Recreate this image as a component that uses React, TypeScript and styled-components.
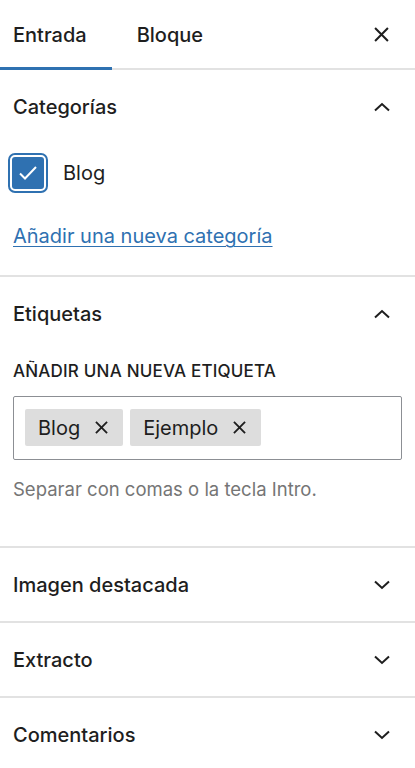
import styled, { createGlobalStyle } from 'styled-components';

const GlobalStyle = createGlobalStyle`
  html, body {
    margin: 0;
    padding: 0;
    background: #ffffff;
  }
  body {
    font-family: 'Inter', 'Noto Sans', sans-serif;
    color: #1e1e1e;
    -webkit-font-smoothing: antialiased;
  }
`;

const accent = '#2f71b1';

const Sidebar = styled.aside`
  width: 415px;
  background: #fff;
`;

const TabBar = styled.div`
  display: flex;
  align-items: stretch;
  height: 68px;
  border-bottom: 2px solid #e2e2e2;
`;

const Tab = styled.button<{ $active?: boolean }>`
  display: flex;
  align-items: center;
  padding: 0 25px;
  margin-bottom: -2px;
  border: 0;
  background: none;
  font: 500 20px 'Inter', sans-serif;
  color: #1e1e1e;
  box-shadow: ${p => (p.$active ? `inset 0 -3px 0 ${accent}` : 'none')};
  cursor: pointer;

  &:first-child {
    padding-left: 13px;
  }
`;

const CloseButton = styled.button`
  margin-left: auto;
  width: 60px;
  display: flex;
  align-items: center;
  justify-content: center;
  padding: 0 7px 0 0;
  border: 0;
  background: none;
  color: #1e1e1e;
`;

const Panel = styled.section`
  border-bottom: 2px solid #e2e2e2;
`;

const PanelHeader = styled.div`
  height: 73px;
  display: flex;
  align-items: center;
  justify-content: space-between;
  padding: 0 24px 0 13px;
`;

const PanelTitle = styled.h2`
  margin: 0;
  font: 500 20px/1 'Inter', sans-serif;
  color: #1e1e1e;
`;

const PanelBody = styled.div<{ $pt: number; $pb: number }>`
  padding: ${p => p.$pt}px 13px ${p => p.$pb}px;
`;

const CheckRow = styled.label`
  display: flex;
  align-items: center;
  gap: 15px;
  font: 400 20px 'Inter', sans-serif;
`;

const CheckBox = styled.span`
  box-sizing: border-box;
  width: 40px;
  height: 40px;
  margin-left: -5px;
  border: 2px solid ${accent};
  border-radius: 7px;
  padding: 2px;
  display: flex;
`;

const CheckFill = styled.span`
  flex: 1;
  background: ${accent};
  border-radius: 3px;
  display: flex;
  align-items: center;
  justify-content: center;
`;

const AddLink = styled.a`
  display: block;
  margin-top: 29px;
  font: 400 20px/28px 'Inter', sans-serif;
  color: ${accent};
  text-decoration: underline;
  text-underline-offset: 3px;
  text-decoration-thickness: 1px;
`;

const FieldLabel = styled.div`
  font: 500 17px/20px 'Inter', sans-serif;
  text-transform: uppercase;
  letter-spacing: 0.2px;
  color: #1e1e1e;
`;

const TokenField = styled.div`
  box-sizing: border-box;
  margin-top: 15px;
  height: 64px;
  border: 1px solid #8c8f94;
  border-radius: 2px;
  padding: 12px 11px;
  display: flex;
  gap: 7px;
`;

const Token = styled.span`
  display: flex;
  align-items: center;
  gap: 15px;
  height: 37px;
  padding: 0 15px 0 13px;
  background: #dddddd;
  border-radius: 2px;
  font: 400 20px 'Inter', sans-serif;
  color: #1e1e1e;
`;

const Help = styled.p`
  margin: 17px 0 0;
  font: 400 18.5px/24px 'Inter', sans-serif;
  color: #757575;
`;

const CloseIcon = ({ size, weight = 1.9 }: { size: number; weight?: number }) => (
  <svg width={size} height={size} viewBox="0 0 14 14" fill="none">
    <path d="M1 1l12 12M13 1L1 13" stroke="currentColor" strokeWidth={weight} />
  </svg>
);

const Chevron = ({ up }: { up?: boolean }) => (
  <svg width="18" height="10" viewBox="0 0 18 10" fill="none">
    <path
      d={up ? 'M2 8.5L9 2l7 6.5' : 'M2 1.5L9 8l7-6.5'}
      stroke="#1e1e1e"
      strokeWidth="2"
    />
  </svg>
);

const collapsed = ['Imagen destacada', 'Extracto', 'Comentarios'];

export default function App() {
  return (
    <>
      <GlobalStyle />
      <Sidebar>
        <TabBar>
          <Tab $active>Entrada</Tab>
          <Tab>Bloque</Tab>
          <CloseButton aria-label="Cerrar">
            <CloseIcon size={15} />
          </CloseButton>
        </TabBar>

        <Panel>
          <PanelHeader>
            <PanelTitle>Categorías</PanelTitle>
            <Chevron up />
          </PanelHeader>
          <PanelBody $pt={10} $pb={25}>
            <CheckRow>
              <CheckBox>
                <CheckFill>
                  <svg width="20" height="16" viewBox="0 0 20 16" fill="none">
                    <path d="M2 8.5l5 5L18 2" stroke="#fff" strokeWidth="2" />
                  </svg>
                </CheckFill>
              </CheckBox>
              Blog
            </CheckRow>
            <AddLink href="#">Añadir una nueva categoría</AddLink>
          </PanelBody>
        </Panel>

        <Panel>
          <PanelHeader>
            <PanelTitle>Etiquetas</PanelTitle>
            <Chevron up />
          </PanelHeader>
          <PanelBody $pt={11} $pb={45}>
            <FieldLabel>Añadir una nueva etiqueta</FieldLabel>
            <TokenField>
              <Token>
                Blog
                <CloseIcon size={13} weight={2} />
              </Token>
              <Token>
                Ejemplo
                <CloseIcon size={13} weight={2} />
              </Token>
            </TokenField>
            <Help>Separar con comas o la tecla Intro.</Help>
          </PanelBody>
        </Panel>

        {collapsed.map(title => (
          <Panel key={title}>
            <PanelHeader>
              <PanelTitle>{title}</PanelTitle>
              <Chevron />
            </PanelHeader>
          </Panel>
        ))}
      </Sidebar>
    </>
  );
}
